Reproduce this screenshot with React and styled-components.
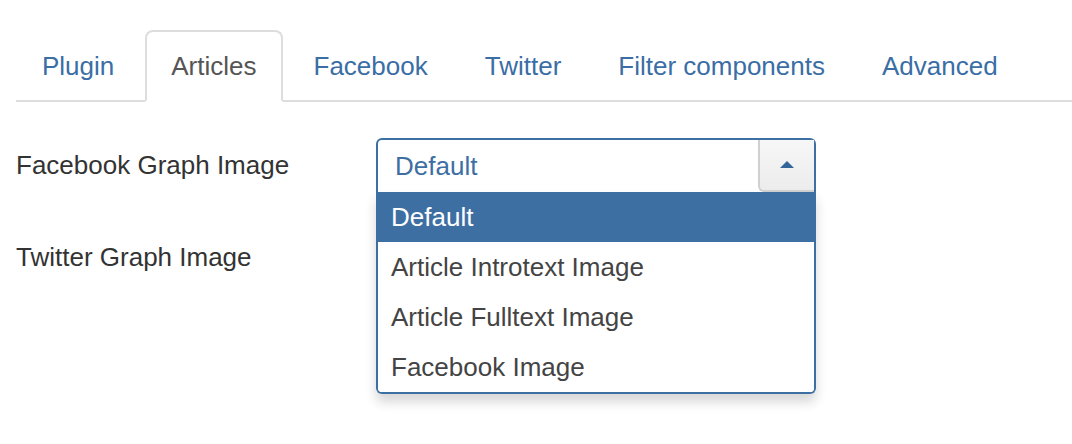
import React from "react";
import styled, { createGlobalStyle } from "styled-components";

const Global = createGlobalStyle`
  html, body { margin: 0; padding: 0; background: #fff; }
  body { font-family: "Liberation Sans", Arial, sans-serif; }
  * { box-sizing: border-box; }
`;

const BLUE = "#3d6fa3";

const Page = styled.div`
  padding: 30px 0 0 16px;
  width: 1072px;
  height: 444px;
  overflow: hidden;
`;

const Tabs = styled.ul`
  display: flex;
  list-style: none;
  margin: 0;
  padding: 0;
  border-bottom: 2px solid #ddd;
`;

const Tab = styled.li`
  margin: 0 5px -2px 0;
  padding: 16px 24px;
  line-height: 36px;
  font-size: 26px;
  border: 2px solid ${(p) => (p.$active ? "#ddd" : "transparent")};
  border-bottom-color: ${(p) => (p.$active ? "#fff" : "transparent")};
  border-radius: 8px 8px 0 0;
  background: ${(p) => (p.$active ? "#fff" : "transparent")};
  color: ${(p) => (p.$active ? "#555" : "#3a6ea5")};
  cursor: pointer;
`;

const Form = styled.div`
  margin-top: 36px;
`;

const Row = styled.div`
  display: grid;
  grid-template-columns: 360px 440px;
  margin-bottom: 38px;
  height: ${(p) => p.$h}px;
`;

const Label = styled.label`
  padding-top: 9px;
  font-size: 26px;
  line-height: 36px;
  color: #333;
`;

const SelectWrap = styled.div`
  position: relative;
  width: 440px;
`;

const SelectBox = styled.div`
  display: flex;
  align-items: stretch;
  height: 54px;
  border: 2px solid ${BLUE};
  border-bottom: none;
  border-radius: 6px 6px 0 0;
  background: #fff;
`;

const SelectValue = styled.span`
  flex: 1;
  padding-left: 17px;
  font-size: 26px;
  line-height: 52px;
  color: ${BLUE};
`;

const ArrowButton = styled.span`
  display: flex;
  align-items: center;
  justify-content: center;
  width: 56px;
  height: 52px;
  background: linear-gradient(#f7f7f7, #ececec);
  border-left: 2px solid #d0d0d0;
  border-bottom: 2px solid #d0d0d0;
  border-bottom-left-radius: 6px;
`;

const Triangle = styled.span`
  width: 0;
  height: 0;
  border-left: 7px solid transparent;
  border-right: 7px solid transparent;
  border-bottom: 7px solid #33669a;
  margin-top: -1px;
`;

const Drop = styled.ul`
  position: absolute;
  top: 100%;
  left: 0;
  width: 440px;
  margin: 0;
  padding: 0;
  list-style: none;
  background: #fff;
  border: 2px solid ${BLUE};
  border-top: none;
  border-radius: 0 0 6px 6px;
  box-shadow: 0 8px 12px rgba(0, 0, 0, 0.16);
  overflow: hidden;
`;

const Option = styled.li`
  height: 50px;
  padding-left: 13px;
  font-size: 26px;
  line-height: 50px;
  color: ${(p) => (p.$hl ? "#fff" : "#444")};
  background: ${(p) => (p.$hl ? BLUE : "#fff")};
`;

const tabs = ["Plugin", "Articles", "Facebook", "Twitter", "Filter components", "Advanced"];
const options = ["Default", "Article Introtext Image", "Article Fulltext Image", "Facebook Image"];

export default function App() {
  return (
    <Page>
      <Global />
      <Tabs>
        {tabs.map((t) => (
          <Tab key={t} $active={t === "Articles"}>
            {t}
          </Tab>
        ))}
      </Tabs>
      <Form>
        <Row $h={54}>
          <Label>Facebook Graph Image</Label>
          <SelectWrap>
            <SelectBox>
              <SelectValue>Default</SelectValue>
              <ArrowButton>
                <Triangle />
              </ArrowButton>
            </SelectBox>
            <Drop>
              {options.map((o, i) => (
                <Option key={o} $hl={i === 0}>
                  {o}
                </Option>
              ))}
            </Drop>
          </SelectWrap>
        </Row>
        <Row $h={54}>
          <Label>Twitter Graph Image</Label>
        </Row>
      </Form>
    </Page>
  );
}
